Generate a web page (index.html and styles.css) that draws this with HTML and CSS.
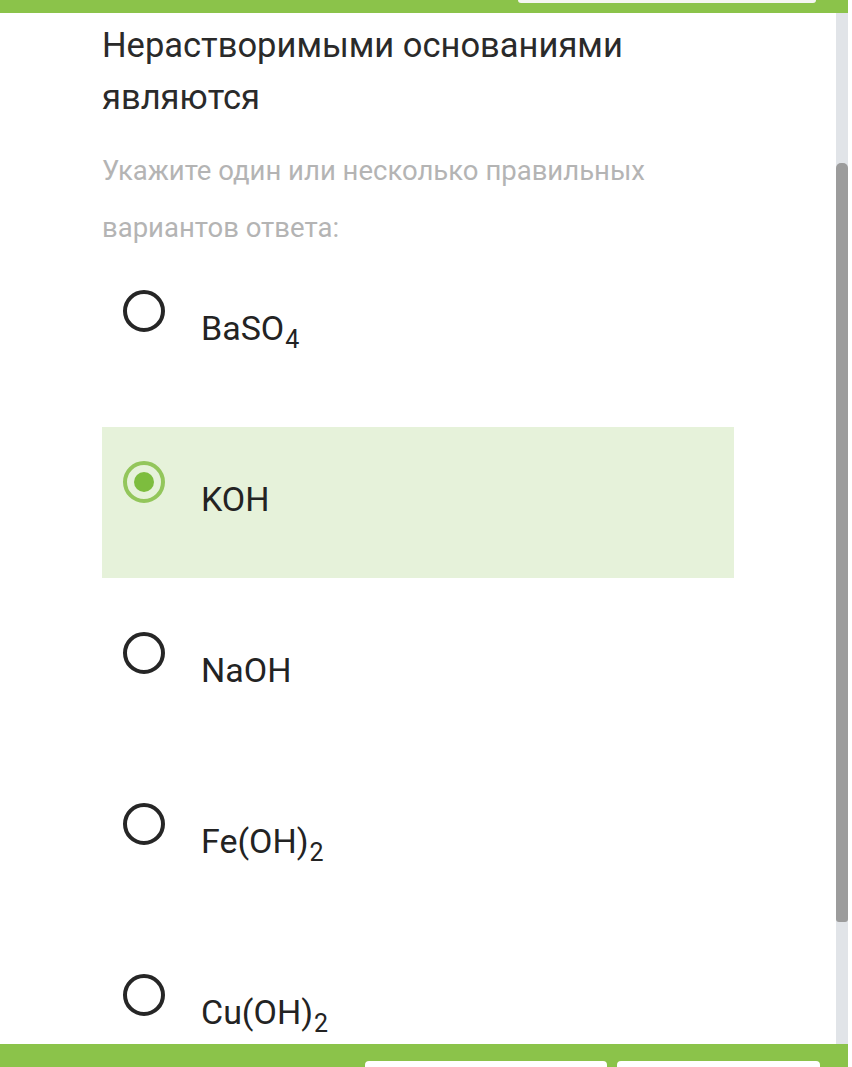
FILE: index.html
```html
<!DOCTYPE html>
<html lang="ru">
<head>
<meta charset="utf-8">
<title>Вопрос</title>
<link rel="stylesheet" href="styles.css">
</head>
<body>
<div class="page">
  <header class="topbar">
    <div class="top-btn"></div>
  </header>
  <div class="middle">
    <main class="content">
      <h1 class="title">Нерастворимыми основаниями являются</h1>
      <p class="hint">Укажите один или несколько правильных вариантов ответа:</p>
      <ul class="options">
        <li class="option">
          <span class="radio"></span>
          <span class="label">BaSO<span class="sub">4</span></span>
        </li>
        <li class="option selected">
          <span class="radio checked"></span>
          <span class="label">KOH</span>
        </li>
        <li class="option">
          <span class="radio"></span>
          <span class="label">NaOH</span>
        </li>
        <li class="option">
          <span class="radio"></span>
          <span class="label">Fe(OH)<span class="sub">2</span></span>
        </li>
        <li class="option">
          <span class="radio"></span>
          <span class="label">Cu(OH)<span class="sub">2</span></span>
        </li>
      </ul>
    </main>
    <div class="scrollbar"><div class="thumb"></div></div>
    <div class="edge"></div>
  </div>
  <footer class="bottombar">
    <div class="btn btn-a"></div>
    <div class="btn btn-b"></div>
  </footer>
</div>
</body>
</html>
```

FILE: styles.css
```css
html, body {
  margin: 0;
  padding: 0;
  background: #ffffff;
}
body {
  font-family: Roboto, "Noto Sans", "Liberation Sans", sans-serif;
}
.page {
  width: 852px;
  height: 1067px;
  display: flex;
  flex-direction: column;
  overflow: hidden;
}
.topbar {
  flex: 0 0 13px;
  width: 848px;
  background: #8bc34a;
  display: flex;
  align-items: flex-start;
}
.top-btn {
  margin-left: 518px;
  width: 298px;
  height: 3px;
  background: #f4f6f1;
  border-radius: 0 0 4px 4px;
}
.middle {
  flex: 1 1 auto;
  display: flex;
  min-height: 0;
}
.content {
  flex: 0 0 836px;
  padding-left: 102px;
  box-sizing: border-box;
  overflow: hidden;
}
.title {
  margin: 6px 0 0 0;
  width: 640px;
  font-size: 34.5px;
  font-weight: 400;
  line-height: 52px;
  color: #2a2a2a;
}
.hint {
  margin: 19px 0 0 0;
  width: 640px;
  font-size: 27.5px;
  line-height: 57px;
  color: #b4b4b4;
}
.options {
  list-style: none;
  margin: 0;
  padding: 0;
  width: 632px;
}
.option {
  height: 151px;
  margin-bottom: 20px;
  padding: 34px 0 0 21px;
  box-sizing: border-box;
  display: flex;
  align-items: flex-start;
  gap: 36px;
}
.option.selected {
  background: #e6f2da;
}
.radio {
  flex: 0 0 auto;
  width: 42px;
  height: 42px;
  box-sizing: border-box;
  border: 4px solid #262626;
  border-radius: 50%;
  display: flex;
  align-items: center;
  justify-content: center;
}
.radio.checked {
  border-color: #93c65b;
}
.radio.checked::after {
  content: "";
  width: 20px;
  height: 20px;
  border-radius: 50%;
  background: #7dbd3e;
}
.label {
  margin-top: 18px;
  font-size: 34px;
  line-height: 40px;
  color: #232323;
}
.sub {
  font-size: 25px;
  margin-left: 1px;
  vertical-align: -8px;
  line-height: 0;
}
.scrollbar {
  flex: 0 0 12px;
  background: #e1e4e8;
  padding-top: 150px;
  box-sizing: border-box;
}
.thumb {
  height: 759px;
  background: #9c9c9c;
  border-radius: 5px 5px 3px 3px;
}
.edge {
  flex: 0 0 4px;
}
.bottombar {
  flex: 0 0 23px;
  width: 848px;
  background: #8bc34a;
  display: flex;
  align-items: flex-end;
  gap: 10px;
  padding-left: 365px;
  box-sizing: border-box;
}
.btn {
  height: 6px;
  background: #ffffff;
  border-radius: 4px 4px 0 0;
}
.btn-a { width: 242px; }
.btn-b { width: 203px; }
```
